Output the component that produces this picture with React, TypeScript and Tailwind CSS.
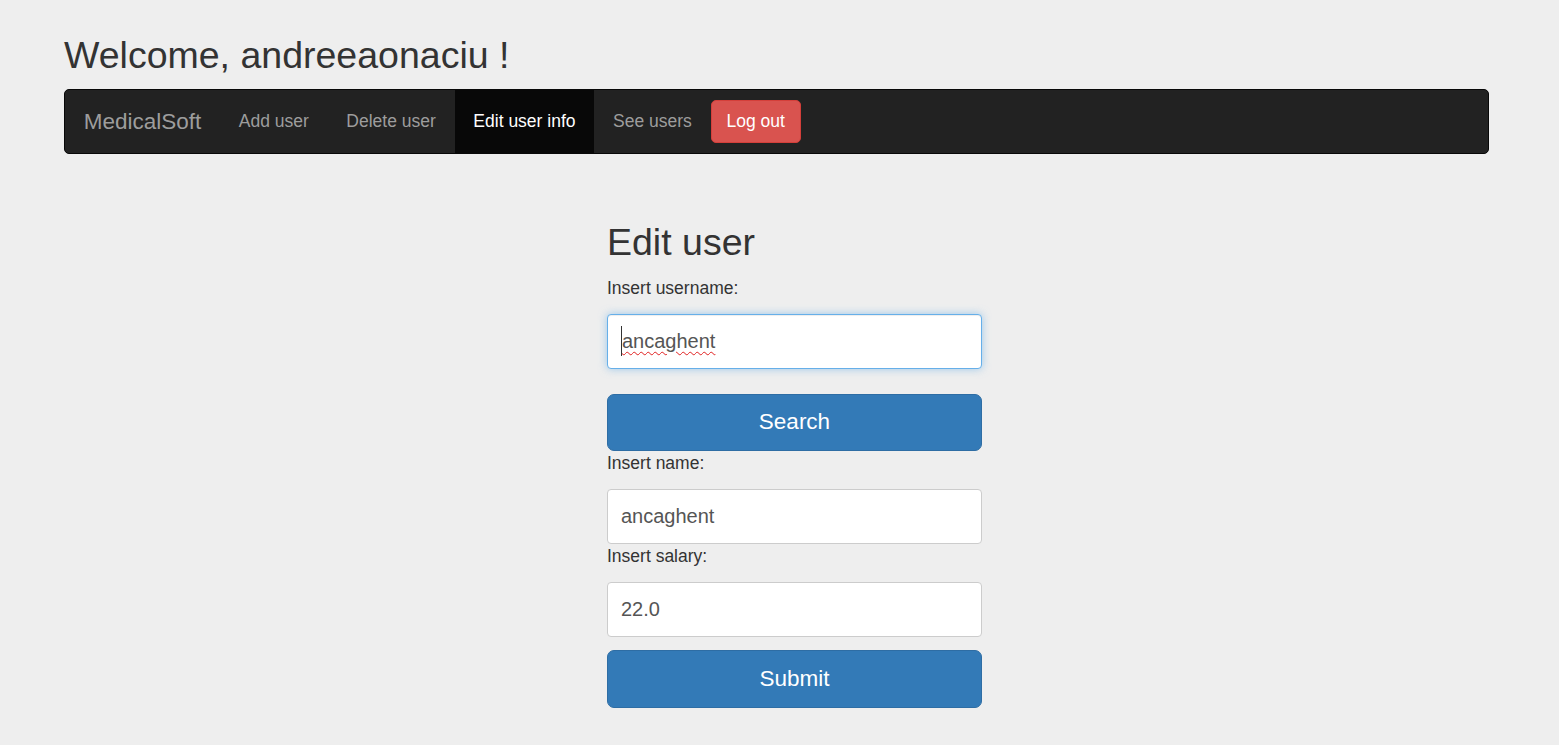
import React from "react";

const navLinks = ["Add user", "Delete user", "Edit user info", "See users"];

function Field({ label, value, focused }: { label: string; value: string; focused?: boolean }) {
  return (
    <div>
      <label className="block text-[17.5px] leading-[25px]">{label}</label>
      {focused ? (
        // the focused one: blue glow, caret and spellcheck squiggle
        <div className="mt-[13px] flex h-[55px] items-center rounded-[4px] border border-[#66afe9] bg-white px-[13px] text-[20px] text-[#555] shadow-[inset_0_1px_1px_rgba(0,0,0,0.075),0_0_8px_rgba(102,175,233,0.6)]">
          <span className="border-l border-[#333] underline decoration-wavy decoration-[#e02020] decoration-1 underline-offset-[3px]">
            {value}
          </span>
        </div>
      ) : (
        <input
          readOnly
          value={value}
          className="mt-[13px] block h-[55px] w-full rounded-[4px] border border-[#ccc] bg-white px-[13px] text-[20px] text-[#555] outline-none"
        />
      )}
    </div>
  );
}

function BlueButton({ children }: { children: React.ReactNode }) {
  return (
    <button className="block h-[57.5px] w-full rounded-[7px] border border-[#2e6da4] bg-[#337ab7] text-[22.5px] text-white">
      {children}
    </button>
  );
}

export default function App() {
  return (
    <div className="min-h-screen bg-[#eeeeee] font-['Liberation_Sans',Arial,sans-serif] text-[#333]">
      <div className="ml-[64px] w-[1425px] pt-[35px]">
        <h2 className="text-[37.5px] leading-[1.1]">Welcome, andreeaonaciu !</h2>

        {/* Navbar */}
        <nav className="mt-[13px] flex h-[65px] items-start rounded-[5px] border border-[#080808] bg-[#222222]">
          <a className="px-[18.75px] py-[18.75px] text-[22.5px] leading-[25px] text-[#9d9d9d]">MedicalSoft</a>
          {navLinks.map((l) => (
            <a
              key={l}
              className={
                l === "Edit user info"
                  ? "bg-[#080808] px-[18.75px] py-[18.75px] text-[17.5px] leading-[25px] text-white"
                  : "px-[18.75px] py-[18.75px] text-[17.5px] leading-[25px] text-[#9d9d9d]"
              }
            >
              {l}
            </a>
          ))}
          <button className="mt-[10px] h-[42.5px] rounded-[5px] border border-[#d43f3a] bg-[#d9534f] px-[15px] text-[17.5px] leading-[25px] text-white">
            Log out
          </button>
        </nav>

        {/* Edit form */}
        <div className="ml-[543px] mt-[68px] w-[375px]">
          <h2 className="mb-[12px] text-[37.5px] leading-[1.1]">Edit user</h2>
          <Field label="Insert username:" value="ancaghent" focused />
          <div className="mt-[25px]">
            <BlueButton>Search</BlueButton>
          </div>
          <Field label="Insert name:" value="ancaghent" />
          <Field label="Insert salary:" value="22.0" />
          <div className="mt-[13px]">
            <BlueButton>Submit</BlueButton>
          </div>
        </div>
      </div>
    </div>
  );
}
